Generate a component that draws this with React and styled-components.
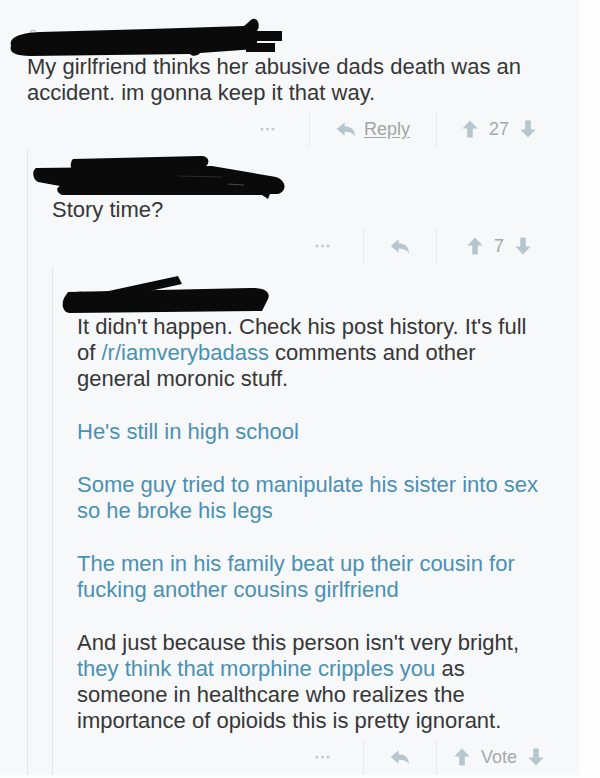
import React from "react";
import styled, { createGlobalStyle } from "styled-components";

const Global = createGlobalStyle`
  html, body { margin: 0; padding: 0; background: #fdfdfd; }
  body { font-family: "Liberation Sans", Arial, Helvetica, sans-serif; }
`;

const Panel = styled.div`
  box-sizing: border-box;
  width: 579px;
  min-height: 772px;
  background: #f7f8f9;
  padding: 12px 18px 0 27px;
  color: #363636;
`;

const Comment = styled.div`
  display: flex;
  flex-direction: column;
`;

const Header = styled.div`
  position: relative;
  height: 42px;
`;

const Username = styled.span`
  position: absolute;
  left: 0;
  top: ${(p) => p.$top}px;
  font-size: 13px;
  color: #b4b4b4;
`;

const Redaction = styled.svg`
  position: absolute;
  top: 0;
  left: ${(p) => -p.$left}px;
  overflow: visible;
`;

const Body = styled.div`
  padding-right: 12px;
  font-size: 22px;
  line-height: 26px;
`;

const Para = styled.p`
  margin: 0 0 27px;
  color: ${(p) => (p.$link ? "#4a90b3" : "#363636")};
  &:last-child { margin-bottom: 0; }
`;

const Link = styled.span`
  color: #4a90b3;
`;

const Bar = styled.div`
  display: flex;
  justify-content: flex-end;
  align-items: stretch;
  height: 36px;
  margin-top: 5px;
`;

const MoreCell = styled.div`
  width: 82px;
  display: flex;
  align-items: center;
  justify-content: center;
`;

const ReplyCell = styled.div`
  display: flex;
  align-items: center;
  gap: 8px;
  padding: 0 26px;
  border-left: 1px solid #e7eaec;
`;

const ReplyText = styled.span`
  font-size: 18px;
  color: #a3a3a3;
  text-decoration: underline;
  text-underline-offset: 2px;
`;

const VoteCell = styled.div`
  width: 124px;
  display: flex;
  align-items: center;
  justify-content: center;
  gap: 11px;
  border-left: 1px solid #e7eaec;
`;

const Score = styled.span`
  font-size: 18px;
  color: #a8a8a8;
`;

const Replies = styled.div`
  margin-top: 3px;
  padding-top: 5px;
  padding-left: 24px;
  border-left: 1px solid #e2e5e8;
`;

const ICON = "#b5c6cf";

const Dots = () => (
  <svg width="15" height="4" viewBox="0 0 15 4">
    <circle cx="2" cy="2" r="1.5" fill="#c8c8c8" />
    <circle cx="7.5" cy="2" r="1.5" fill="#c8c8c8" />
    <circle cx="13" cy="2" r="1.5" fill="#c8c8c8" />
  </svg>
);

const ReplyIcon = () => (
  <svg width="20" height="17" viewBox="0 0 20 17">
    <path
      d="M0.8 8 L8.6 1.2 L8.6 5.2 C14.5 5.2 19 8.5 19 15.5 C16.8 11.8 13.5 10.8 8.6 10.8 L8.6 14.8 Z"
      fill={ICON}
    />
  </svg>
);

const UpArrow = () => (
  <svg width="16" height="18" viewBox="0 0 16 18">
    <path d="M8 0.6 L15.6 8.4 L10.8 8.4 L10.8 17.4 L5.2 17.4 L5.2 8.4 L0.4 8.4 Z" fill={ICON} />
  </svg>
);

const DownArrow = () => (
  <svg width="16" height="18" viewBox="0 0 16 18">
    <path d="M8 17.4 L15.6 9.6 L10.8 9.6 L10.8 0.6 L5.2 0.6 L5.2 9.6 L0.4 9.6 Z" fill={ICON} />
  </svg>
);

const Actions = ({ reply, score }) => (
  <Bar>
    <MoreCell>
      <Dots />
    </MoreCell>
    <ReplyCell>
      <ReplyIcon />
      {reply && <ReplyText>Reply</ReplyText>}
    </ReplyCell>
    <VoteCell>
      <UpArrow />
      <Score>{score}</Score>
      <DownArrow />
    </VoteCell>
  </Bar>
);

/* redaction scribbles, drawn in page coordinates via viewBox offset */
const Blob1 = () => (
  <Redaction $left={27} width="300" height="48" viewBox="0 12 300 48">
    <circle cx="33" cy="33" r="2.6" fill="none" stroke="#bdbdbd" strokeWidth="1.2" />
    <path
      d="M11 46 C9 38 18 33 40 32 L150 29 L244 26 C249 23 251 18 255 19 C259 20 260 27 257 31 L257 49 L200 53 C198 56 192 57 190 54 L30 56 C14 56 9 52 11 46 Z"
      fill="#0a0a0a"
    />
    <rect x="246" y="31" width="36" height="10" fill="#0a0a0a" />
    <rect x="246" y="43" width="29" height="9" fill="#0a0a0a" />
  </Redaction>
);

const Blob2 = () => (
  <Redaction $left={52} width="300" height="46" viewBox="0 155 300 46">
    <path
      d="M73 159 L200 156 C209 155 211 163 205 167 L180 171 L73 172 C70 168 70 162 73 159 Z"
      fill="#0a0a0a"
    />
    <path
      d="M36 168 L212 166 L276 177 C287 181 287 191 278 194 L270 194 L268 199 L262 195 L62 195 C56 192 56 188 60 186 L38 182 C32 179 32 170 36 168 Z"
      fill="#0a0a0a"
    />
    <path d="M178 176 L222 177" stroke="#2a2a2a" strokeWidth="1.2" fill="none" />
    <path d="M228 184 L244 185" stroke="#4a4a4a" strokeWidth="1.2" fill="none" />
  </Redaction>
);

const Blob3 = () => (
  <Redaction $left={77} width="300" height="46" viewBox="0 272 300 46">
    <path d="M67 300 L178 276 L182 284 L72 308 Z" fill="#0a0a0a" />
    <path
      d="M68 292 L250 288 C266 287 272 293 267 301 L262 311 L70 313 C63 313 61 305 64 298 Z"
      fill="#0a0a0a"
    />
  </Redaction>
);

export default function App() {
  return (
    <>
      <Global />
      <Panel>
        <Comment>
          <Header>
            <Blob1 />
          </Header>
          <Body>
            <Para>My girlfriend thinks her abusive dads death was an accident. im gonna keep it that way.</Para>
          </Body>
          <Actions reply score="27" />
          <Replies>
            <Comment>
              <Header>
                <Blob2 />
              </Header>
              <Body>
                <Para>Story time?</Para>
              </Body>
              <Actions score="7" />
              <Replies>
                <Comment>
                  <Header>
                    <Username $top={16}>Bi</Username>
                    <Blob3 />
                  </Header>
                  <Body>
                    <Para>
                      It didn't happen. Check his post history. It's full of{" "}
                      <Link>/r/iamverybadass</Link> comments and other general moronic stuff.
                    </Para>
                    <Para $link>He's still in high school</Para>
                    <Para $link>Some guy tried to manipulate his sister into sex so he broke his legs</Para>
                    <Para $link>The men in his family beat up their cousin for fucking another cousins girlfriend</Para>
                    <Para>
                      And just because this person isn't very bright,{" "}
                      <Link>they think that morphine cripples you</Link> as someone in healthcare who
                      realizes the importance of opioids this is pretty ignorant.
                    </Para>
                  </Body>
                  <Actions score="Vote" />
                </Comment>
              </Replies>
            </Comment>
          </Replies>
        </Comment>
      </Panel>
    </>
  );
}
